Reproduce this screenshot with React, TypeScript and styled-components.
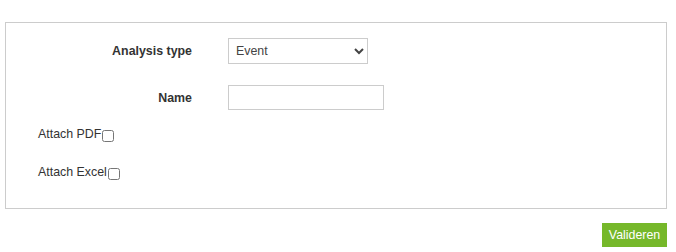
import styled, { createGlobalStyle } from "styled-components";

const GlobalStyle = createGlobalStyle`
  body {
    margin: 0;
    background: #fff;
    font-family: "Liberation Sans", Arial, sans-serif;
    font-size: 12.4px;
    color: #333;
  }
`;

const Page = styled.div`
  padding: 22px 9px 0 5px;
`;

const Panel = styled.div`
  border: 1px solid #ccc;
  padding: 15px 0 29px 31px;
  display: flex;
  flex-direction: column;
`;

const FieldRow = styled.div<{ $height: number; $gap: number }>`
  display: flex;
  align-items: center;
  height: ${(p) => p.$height}px;
  margin-top: ${(p) => p.$gap}px;
`;

const Label = styled.label`
  width: 155px;
  text-align: right;
  font-weight: bold;
  margin-right: 36px;
`;

const Select = styled.select`
  width: 140px;
  height: 26px;
  border: 1px solid #ccc;
  border-radius: 0;
  background: #fff;
  font-family: "Liberation Sans", Arial, sans-serif;
  font-size: 12.4px;
  color: #444;
  padding: 0 3px;
  outline: none;
`;

const TextInput = styled.input`
  width: 156px;
  height: 25px;
  box-sizing: border-box;
  border: 1px solid #ccc;
  padding: 0 4px;
  font-family: "Liberation Sans", Arial, sans-serif;
  font-size: 12.4px;
  outline: none;
`;

const CheckRow = styled.div<{ $gap: number }>`
  display: flex;
  align-items: flex-end;
  height: 20px;
  margin-top: ${(p) => p.$gap}px;
  padding-left: 1px;
`;

const CheckLabel = styled.span`
  line-height: 14px;
`;

const Check = styled.input`
  width: 12px;
  height: 12px;
  margin: 0 0 -1px 1px;
`;

const Footer = styled.div`
  display: flex;
  justify-content: flex-end;
  margin-top: 14px;
`;

const Button = styled.button`
  background: #76b82a;
  color: #fff;
  border: none;
  height: 24px;
  width: 65px;
  font-family: "Liberation Sans", Arial, sans-serif;
  font-size: 12.4px;
  padding: 0;
  cursor: pointer;
`;

export default function App() {
  return (
    <Page>
      <GlobalStyle />
      <Panel>
        <FieldRow $height={26} $gap={0}>
          <Label>Analysis type</Label>
          <Select defaultValue="Event">
            <option>Event</option>
            <option>Period</option>
          </Select>
        </FieldRow>
        <FieldRow $height={25} $gap={21}>
          <Label>Name</Label>
          <TextInput type="text" />
        </FieldRow>
        <CheckRow $gap={11}>
          <CheckLabel>Attach PDF</CheckLabel>
          <Check type="checkbox" />
        </CheckRow>
        <CheckRow $gap={18}>
          <CheckLabel>Attach Excel</CheckLabel>
          <Check type="checkbox" />
        </CheckRow>
      </Panel>
      <Footer>
        <Button>Valideren</Button>
      </Footer>
    </Page>
  );
}
